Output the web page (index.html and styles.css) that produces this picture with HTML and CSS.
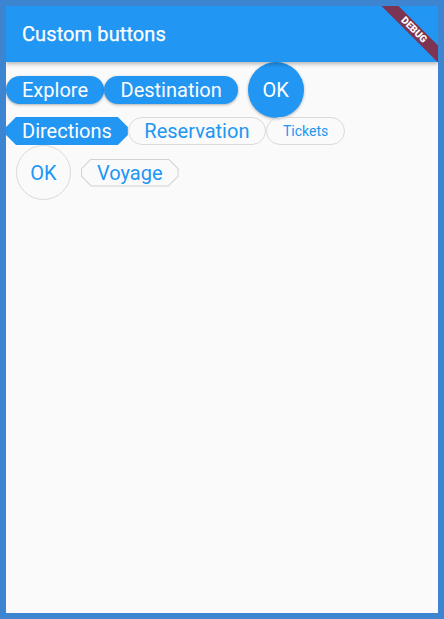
FILE: index.html
```html
<!DOCTYPE html>
<html>
<head>
<meta charset="utf-8">
<link rel="stylesheet" href="styles.css">
</head>
<body>
<div class="app">
  <header class="appbar"><h1 class="title">Custom buttons</h1></header>
  <main class="content">
    <div class="row row-1">
      <button class="btn stadium filled">Explore</button>
      <button class="btn stadium filled wide">Destination</button>
      <button class="btn circle filled circle-top">OK</button>
    </div>
    <div class="row row-2">
      <span class="btn bevel filled">Directions</span>
      <button class="btn stadium outline wide">Reservation</button>
      <button class="btn stadium outline small">Tickets</button>
    </div>
    <div class="row row-3">
      <button class="btn circle outline circle-bottom">OK</button>
      <span class="bevel-frame"><span class="btn bevel-inner">Voyage</span></span>
    </div>
  </main>
  <div class="debug-banner"><span class="debug-text">DEBUG</span></div>
</div>
</body>
</html>
```
FILE: styles.css
```css
html, body {
  margin: 0;
  padding: 0;
}
body {
  background: #3d84d1;
  padding: 6px;
  box-sizing: border-box;
  height: 619px;
  font-family: Roboto, "Liberation Sans", sans-serif;
}
.app {
  position: relative;
  overflow: hidden;
  height: 607px;
  background: #fafafa;
}
.appbar {
  height: 56px;
  background: #2196f3;
  display: flex;
  align-items: center;
  padding-left: 16px;
  box-shadow: 0 2px 4px rgba(0, 0, 0, 0.28);
  position: relative;
  z-index: 1;
}
.title {
  margin: 0;
  color: #fff;
  font-size: 20px;
  font-weight: 400;
  letter-spacing: 0.1px;
  -webkit-text-stroke: 0.25px #fff;
}
.content {
  display: flex;
  flex-direction: column;
}
.row {
  display: flex;
  align-items: center;
}
.row-1 { height: 55px; }
.row-2 { height: 28px; }
.row-3 { height: 55px; }

.btn {
  font-family: Roboto, "Liberation Sans", sans-serif;
  font-size: 20px;
  font-weight: 400;
  line-height: 28px;
  height: 28px;
  padding: 0 16px;
  margin: 0;
  border: none;
  background: none;
  box-sizing: border-box;
  display: inline-flex;
  align-items: center;
  justify-content: center;
  white-space: nowrap;
  flex: none;
}
.stadium { border-radius: 14px; }
.filled {
  background: #2196f3;
  color: #fff;
  box-shadow: 0 1px 3px rgba(0, 0, 0, 0.3);
}
.outline {
  background: transparent;
  color: #2196f3;
  border: 1px solid #dadada;
  padding: 0 15px;
}
.wide { padding: 0 16.5px; }
.outline.wide { padding: 0 15.5px; }
.small {
  font-size: 14px;
  padding: 0 16px;
}
.circle {
  width: 56px;
  height: 56px;
  border-radius: 50%;
  padding: 0;
}
.circle-top { margin-left: 9.5px; }
.circle-bottom {
  margin-left: 10px;
  width: 55px;
  height: 55px;
}
.bevel {
  box-shadow: none;
  clip-path: polygon(10px 0, calc(100% - 10px) 0, 100% 10px, 100% calc(100% - 10px), calc(100% - 10px) 100%, 10px 100%, 0 calc(100% - 10px), 0 10px);
}
.bevel-frame {
  margin-left: 10px;
  display: inline-flex;
  padding: 1px;
  background: #d2d2d2;
  clip-path: polygon(10px 0, calc(100% - 10px) 0, 100% 10px, 100% calc(100% - 10px), calc(100% - 10px) 100%, 10px 100%, 0 calc(100% - 10px), 0 10px);
}
.bevel-inner {
  height: 26px;
  padding: 0 15px;
  background: #fafafa;
  color: #2196f3;
  clip-path: polygon(9.4px 0, calc(100% - 9.4px) 0, 100% 9.4px, 100% calc(100% - 9.4px), calc(100% - 9.4px) 100%, 9.4px 100%, 0 calc(100% - 9.4px), 0 9.4px);
}
.debug-banner {
  position: absolute;
  z-index: 2;
  width: 80px;
  height: 12px;
  right: -16px;
  top: 18px;
  transform: rotate(45deg);
  background: #7c3452;
  display: flex;
  align-items: center;
  justify-content: center;
}
.debug-text {
  color: #fff;
  font-family: Roboto, "Liberation Sans", sans-serif;
  font-size: 10px;
  font-weight: 900;
  line-height: 12px;
}
```
